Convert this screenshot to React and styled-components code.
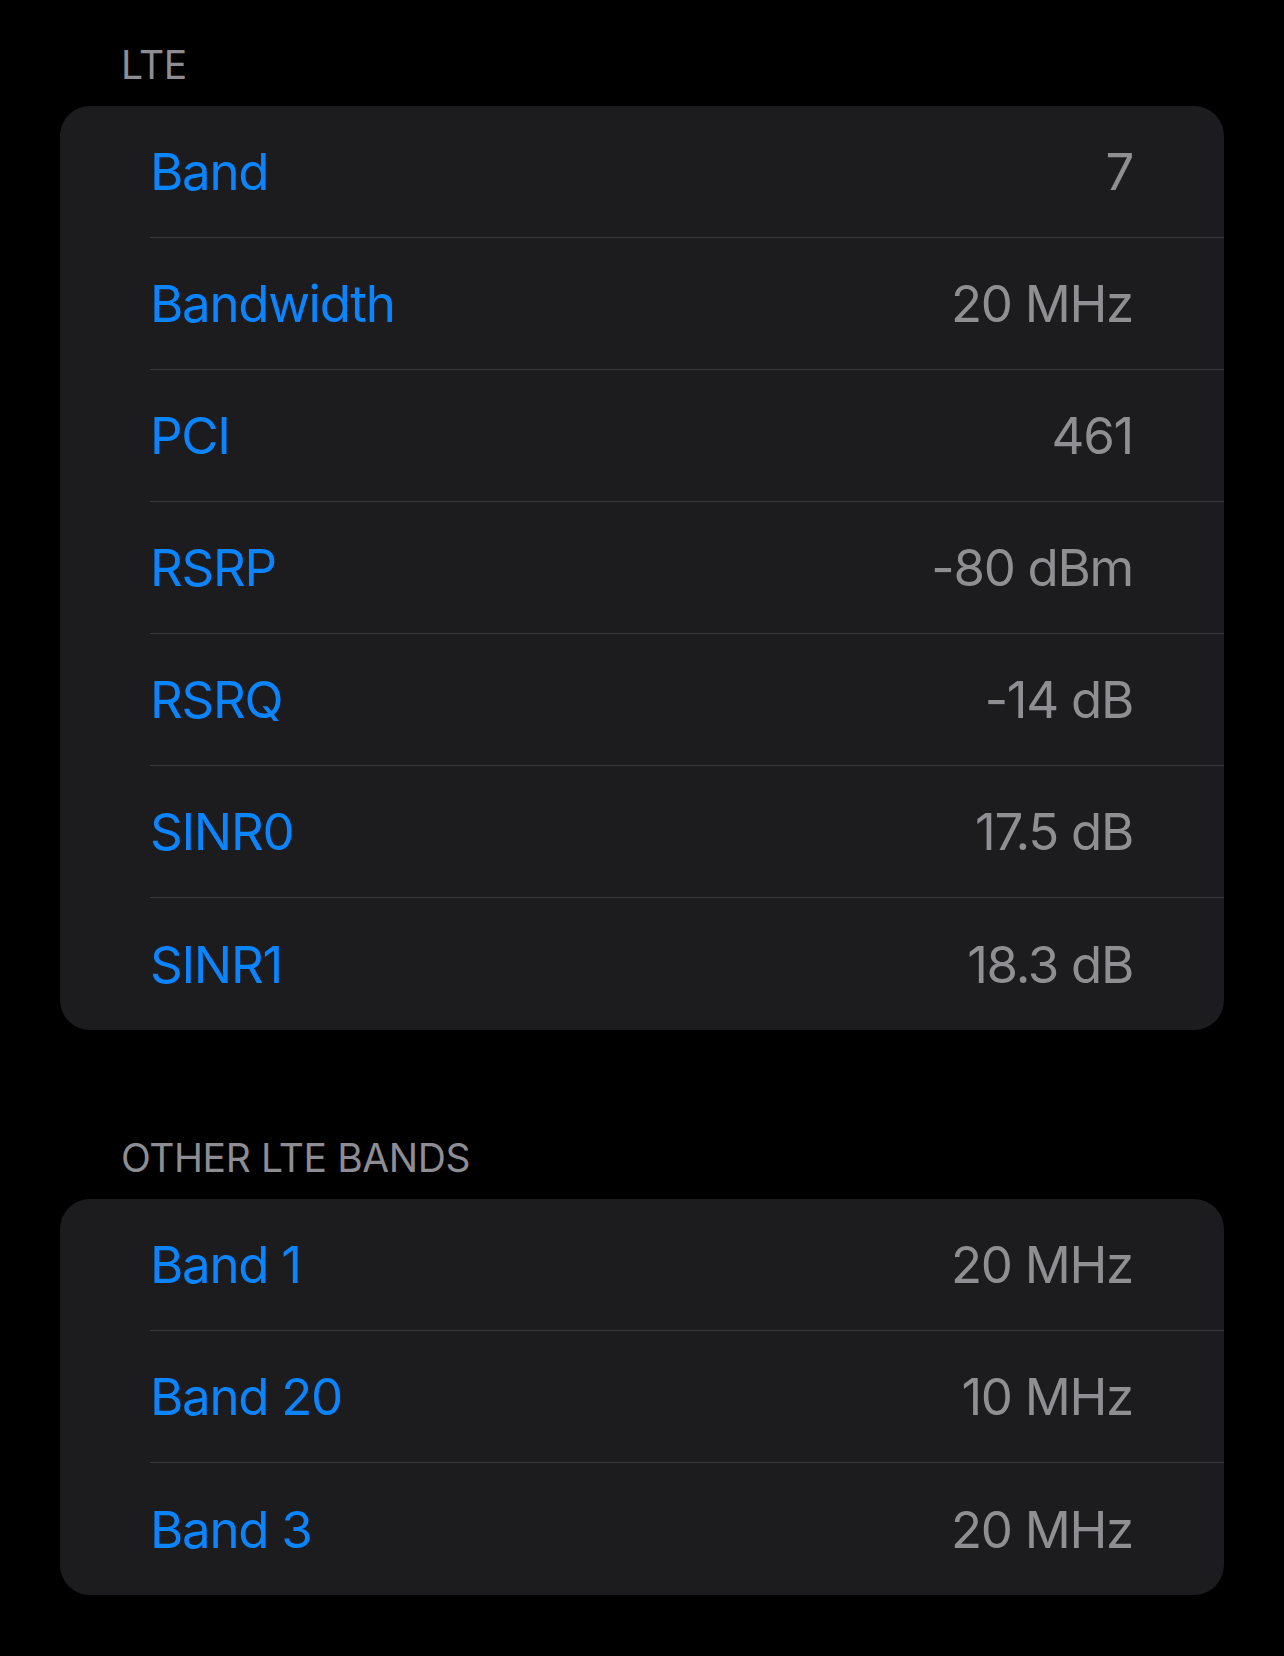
import { createGlobalStyle, styled } from "styled-components"

const GlobalStyle = createGlobalStyle`
    html, body {
        margin: 0;
        padding: 0;
        background-color: #000;
    }
    body {
        font-family: Inter, "Open Sans", "Liberation Sans", sans-serif;
        -webkit-font-smoothing: antialiased;
    }
`

const lteRows = [
    { label: "Band", value: "7" },
    { label: "Bandwidth", value: "20 MHz" },
    { label: "PCI", value: "461" },
    { label: "RSRP", value: "-80 dBm" },
    { label: "RSRQ", value: "-14 dB" },
    { label: "SINR0", value: "17.5 dB" },
    { label: "SINR1", value: "18.3 dB" },
]

const otherBands = [
    { label: "Band 1", value: "20 MHz" },
    { label: "Band 20", value: "10 MHz" },
    { label: "Band 3", value: "20 MHz" },
]

const Section = ({ title, rows }) => (
    <SectionWrapper>
        <SectionHeader>{title}</SectionHeader>
        <Card>
            {rows.map((row, i) => (
                <Row key={row.label}>
                    <RowInner $last={i === rows.length - 1}>
                        <Label>{row.label}</Label>
                        <Value>{row.value}</Value>
                    </RowInner>
                </Row>
            ))}
        </Card>
    </SectionWrapper>
)

export default function App() {
    return (
        <>
            <GlobalStyle />
            <Page>
                <Section title="LTE" rows={lteRows} />
                <Section title="Other LTE Bands" rows={otherBands} />
            </Page>
        </>
    )
}

const Page = styled.div`
    min-height: 1656px;
    box-sizing: border-box;
    padding: 41px 60px 0 60px;
    display: flex;
    flex-direction: column;
    gap: 104px;
`

const SectionWrapper = styled.section`
    display: flex;
    flex-direction: column;
    gap: 18px;
`

const SectionHeader = styled.h2`
    margin: 0 0 0 61px;
    font-size: 39px;
    line-height: 47px;
    font-weight: 400;
    text-transform: uppercase;
    color: #8d8d93;
    letter-spacing: -0.4px;
`

const Card = styled.div`
    background-color: #1c1c1e;
    border-radius: 30px;
    overflow: hidden;
`

const Row = styled.div`
    padding-left: 90px;
    height: 132px;
    box-sizing: border-box;
`

const RowInner = styled.div`
    height: 100%;
    box-sizing: border-box;
    display: flex;
    align-items: center;
    justify-content: space-between;
    padding-right: 91px;
    border-bottom: ${({ $last }) => ($last ? "none" : "1.5px solid #3a3a3c")};
`

const Label = styled.span`
    font-size: 51px;
    color: #0a84ff;
    letter-spacing: -1.3px;
`

const Value = styled.span`
    font-size: 51px;
    color: #8e8e93;
    letter-spacing: -1.3px;
`
